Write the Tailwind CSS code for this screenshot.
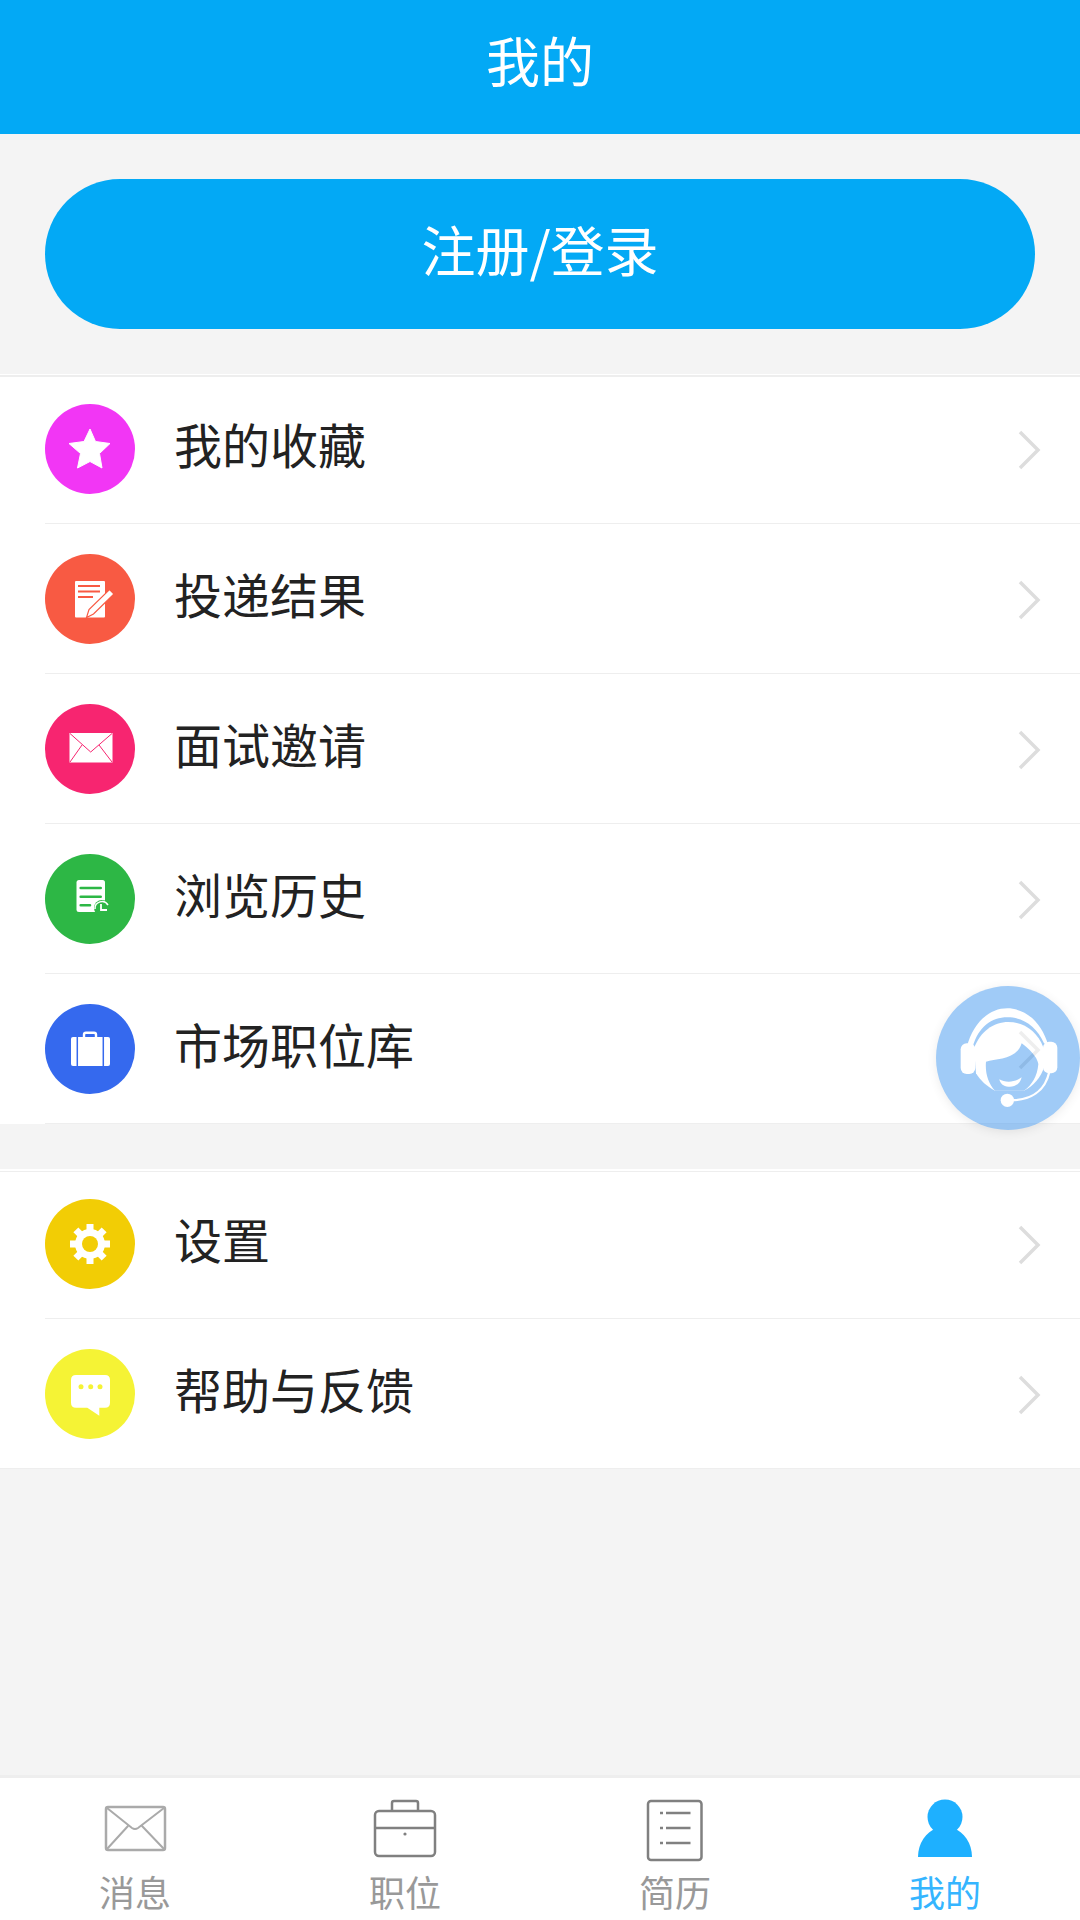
<!DOCTYPE html>
<html lang="zh-CN">
<head>
    <meta charset="UTF-8">
    <meta name="viewport" content="width=device-width, initial-scale=1.0">
    <title>我的</title>
    <script src="https://cdn.jsdelivr.net/npm/@tailwindcss/browser@4"></script>
</head>
<body class="relative w-[1080px] h-[1920px] overflow-hidden bg-[#f4f4f4] font-['Noto_Sans_CJK_SC',sans-serif]">
    <!-- Header -->
    <header class="h-[134px] bg-[#03a9f5] flex justify-center pt-[22px]">
        <h1 class="text-[54px] font-normal leading-[76px] text-white">我的</h1>
    </header>

    <!-- Login -->
    <div class="pt-[45px] px-[45px] h-[241px]">
        <button class="w-full h-[150px] pb-[12px] rounded-[75px] bg-[#03a9f5] text-white text-[54px]">注册/登录</button>
    </div>

    <!-- Main list -->
    <section class="bg-white border-t-2 border-t-[#eeeeee] shadow-[0_-1px_0_#ffffff]">
        <div class="h-[147px] pt-[27px] pl-[45px] ">
            <div class="h-[120px] border-b border-[#eeeeee]">
                <div class="h-[90px] flex items-center">
                    <svg class="w-[90px] h-[90px]" viewBox="0 0 90 90"><circle cx="45" cy="45" r="45" fill="#f236f5"/><path d="M45 25 50.500 37.500 65 39.500 54.500 49.500 57 64 45 57.500 32.500 64 35.500 49.500 24 39.500 39 37.500Z" fill="#fff" stroke="#fff" stroke-linejoin="round"/></svg>
                    <span class="ml-[39px] mb-[12px] text-[48px] text-[#222222]">我的收藏</span>
                    <svg class="ml-auto mt-[2px] mr-[38px] w-[24px] h-[40px]" viewBox="0 0 24 40"><path d="M2 2 20 20 2 38" fill="none" stroke="#dddddd" stroke-width="3.500"/></svg>
                </div>
            </div>
        </div>
        <div class="h-[150px] pt-[30px] pl-[45px]">
            <div class="h-[120px] border-b border-[#eeeeee]">
                <div class="h-[90px] flex items-center">
                    <svg class="w-[90px] h-[90px]" viewBox="0 0 90 90"><circle cx="45" cy="45" r="45" fill="#f85a43"/><rect x="30" y="27" width="30" height="36.500" rx="1" fill="#fff"/><path d="M33 32H55M33 37.500H55M33 43H48" stroke="#f85a43" stroke-width="1.800"/><path d="M64.500 35.500 69 40 48.500 60 41.500 63.500 44 55.500Z" fill="#fff" stroke="#f85a43" stroke-width="1.200"/></svg>
                    <span class="ml-[39px] mb-[12px] text-[48px] text-[#222222]">投递结果</span>
                    <svg class="ml-auto mt-[2px] mr-[38px] w-[24px] h-[40px]" viewBox="0 0 24 40"><path d="M2 2 20 20 2 38" fill="none" stroke="#dddddd" stroke-width="3.500"/></svg>
                </div>
            </div>
        </div>
        <div class="h-[150px] pt-[30px] pl-[45px]">
            <div class="h-[120px] border-b border-[#eeeeee]">
                <div class="h-[90px] flex items-center">
                    <svg class="w-[90px] h-[90px]" viewBox="0 0 90 90"><circle cx="45" cy="45" r="45" fill="#f72570"/><rect x="24.500" y="29" width="43" height="29.500" fill="#fff"/><path d="M25 29.500 45.700 48 67 29.500M25 58 37 41M67 58 54 41" fill="none" stroke="#f72570" stroke-width="1"/></svg>
                    <span class="ml-[39px] mb-[12px] text-[48px] text-[#222222]">面试邀请</span>
                    <svg class="ml-auto mt-[2px] mr-[38px] w-[24px] h-[40px]" viewBox="0 0 24 40"><path d="M2 2 20 20 2 38" fill="none" stroke="#dddddd" stroke-width="3.500"/></svg>
                </div>
            </div>
        </div>
        <div class="h-[150px] pt-[30px] pl-[45px]">
            <div class="h-[120px] border-b border-[#eeeeee]">
                <div class="h-[90px] flex items-center">
                    <svg class="w-[90px] h-[90px]" viewBox="0 0 90 90"><circle cx="45" cy="45" r="45" fill="#2db745"/><rect x="31.500" y="26" width="28.500" height="32" rx="2.500" fill="#fff"/><path d="M35.700 34H55.700M35.700 42.700H55.700M35.700 51.300H45" stroke="#2db745" stroke-width="2.600" stroke-linecap="round"/><circle cx="57" cy="54" r="8" fill="#2db745"/><path d="M50 55A7 7 0 0 1 63 51" fill="none" stroke="#fff" stroke-width="1.500"/><path d="M56 50V56H62" fill="none" stroke="#fff" stroke-width="1.800"/></svg>
                    <span class="ml-[39px] mb-[12px] text-[48px] text-[#222222]">浏览历史</span>
                    <svg class="ml-auto mt-[2px] mr-[38px] w-[24px] h-[40px]" viewBox="0 0 24 40"><path d="M2 2 20 20 2 38" fill="none" stroke="#dddddd" stroke-width="3.500"/></svg>
                </div>
            </div>
        </div>
        <div class="h-[150px] pt-[30px] pl-[45px]">
            <div class="h-[120px] border-b border-[#eeeeee]">
                <div class="h-[90px] flex items-center">
                    <svg class="w-[90px] h-[90px]" viewBox="0 0 90 90"><circle cx="45" cy="45" r="45" fill="#3569ee"/><rect x="26" y="33" width="39" height="29" rx="2" fill="#fff"/><path d="M32.300 33V62M58.300 33V62" stroke="#3569ee" stroke-width="1.500"/><path d="M39 33V30.500Q39 28.700 41 28.700H49Q51 28.700 51 30.500V33" fill="none" stroke="#fff" stroke-width="2.400"/></svg>
                    <span class="ml-[39px] mb-[12px] text-[48px] text-[#222222]">市场职位库</span>
                    <svg class="ml-auto mt-[2px] mr-[38px] w-[24px] h-[40px]" viewBox="0 0 24 40"><path d="M2 2 20 20 2 38" fill="none" stroke="#dddddd" stroke-width="3.500"/></svg>
                </div>
            </div>
        </div>
    </section>

    <!-- Settings list -->
    <section class="mt-[47px] bg-white border-t border-t-[#eeeeee] shadow-[0_-2px_0_#ffffff]">
        <div class="h-[147px] pt-[27px] pl-[45px]">
            <div class="h-[120px] border-b border-[#eeeeee]">
                <div class="h-[90px] flex items-center">
                    <svg class="w-[90px] h-[90px]" viewBox="0 0 90 90"><circle cx="45" cy="45" r="45" fill="#f2cd05"/><g fill="#fff"><rect x="41.500" y="25" width="7" height="40"/><rect x="41.500" y="25" width="7" height="40" transform="rotate(45 45 45)"/><rect x="41.500" y="25" width="7" height="40" transform="rotate(90 45 45)"/><rect x="41.500" y="25" width="7" height="40" transform="rotate(135 45 45)"/></g><circle cx="45" cy="45" r="11.500" fill="none" stroke="#fff" stroke-width="7"/><circle cx="45" cy="45" r="8" fill="#f2cd05"/></svg>
                    <span class="ml-[39px] mb-[12px] text-[48px] text-[#222222]">设置</span>
                    <svg class="ml-auto mt-[2px] mr-[38px] w-[24px] h-[40px]" viewBox="0 0 24 40"><path d="M2 2 20 20 2 38" fill="none" stroke="#dddddd" stroke-width="3.500"/></svg>
                </div>
            </div>
        </div>
        <div class="h-[150px] pt-[30px] border-b border-[#eeeeee]">
            <div class="h-[90px] ml-[45px] flex items-center">
                <svg class="w-[90px] h-[90px]" viewBox="0 0 90 90"><circle cx="45" cy="45" r="45" fill="#f5f335"/><path d="M31 26H60Q65 26 65 31V53.700Q65 58.700 60 58.700H54.300V66.700L42.300 58.700H31Q26 58.700 26 53.700V31Q26 26 31 26Z" fill="#fff"/><circle cx="36" cy="37.700" r="2.500" fill="#f5f335"/><circle cx="45.700" cy="37.700" r="2.500" fill="#f5f335"/><circle cx="55" cy="37.700" r="2.500" fill="#f5f335"/></svg>
                <span class="ml-[39px] mb-[12px] text-[48px] text-[#222222]">帮助与反馈</span>
                <svg class="ml-auto mt-[2px] mr-[38px] w-[24px] h-[40px]" viewBox="0 0 24 40"><path d="M2 2 20 20 2 38" fill="none" stroke="#dddddd" stroke-width="3.500"/></svg>
            </div>
        </div>
    </section>

    <!-- Floating customer service button -->
    <div class="absolute left-[936px] top-[986px] w-[144px] h-[144px] rounded-full bg-[#4398f0] opacity-50 shadow-[0_2px_8px_rgba(0,0,0,0.15)]">
        <svg class="w-[144px] h-[144px]" viewBox="108 78 432 432">
            <g fill="#fff">
                <rect x="182" y="250" width="44" height="92" rx="18"/>
                <rect x="429" y="245" width="43" height="95" rx="18"/>
                <path d="M200 262C220 185 270 145 322 145C380 145 425 190 445 255L432 250C410 200 370 172 322 172C275 172 235 200 218 262Z"/>
                <path d="M222 265C240 215 280 186 325 186C372 186 412 215 430 262L432 320C425 350 400 378 372 392L285 392C260 380 240 360 228 340Z"/>
            </g>
            <path d="M258 305C290 295 350 300 365 250C385 265 412 290 415 312C412 350 395 375 372 392L285 392C265 370 255 340 258 305Z" fill="#4398f0"/>
            <g fill="#fff">
                <path d="M298 358C315 368 345 368 365 352C360 375 340 382 325 380C310 380 300 370 298 358Z"/>
                <circle cx="322" cy="421" r="20"/>
            </g>
            <path d="M335 421C390 420 435 395 448 335" fill="none" stroke="#fff" stroke-width="7"/>
        </svg>
    </div>

    <!-- Tab bar -->
    <nav class="absolute left-0 bottom-0 w-[1080px] h-[145px] bg-white border-t-[3px] border-t-[#eeeeee] grid grid-cols-4">
        <div class="flex flex-col items-center">
            <svg class="mt-[20px] w-[90px] h-[70px]" viewBox="0 0 90 70"><rect x="16" y="9" width="59" height="43" rx="2" fill="none" stroke="#aaaaaa" stroke-width="2.500"/><path d="M17 10 42 30Q45 32 48 30L74 10M17 51 38 28M74 51 52 28" fill="none" stroke="#aaaaaa" stroke-width="2"/></svg>
            <span class="mt-[1px] text-[36px] leading-[44px] text-[#999999]">消息</span>
        </div>
        <div class="flex flex-col items-center">
            <svg class="mt-[20px] w-[90px] h-[70px]" viewBox="0 0 90 70"><rect x="15" y="13" width="60" height="45" rx="4" fill="none" stroke="#808080" stroke-width="2.500"/><path d="M32 13V5Q32 3 34 3H56Q58 3 58 5V13M15 30H75" fill="none" stroke="#808080" stroke-width="2.500"/><circle cx="45" cy="36" r="1.600" fill="#808080"/></svg>
            <span class="mt-[1px] text-[36px] leading-[44px] text-[#999999]">职位</span>
        </div>
        <div class="flex flex-col items-center">
            <svg class="mt-[20px] w-[90px] h-[70px]" viewBox="0 0 90 70"><rect x="18" y="3" width="53.500" height="59" rx="3" fill="none" stroke="#808080" stroke-width="2.500"/><path d="M36 15H60.500M36 30H60.500M36 45H60.500" stroke="#808080" stroke-width="2.500"/><path d="M30 15H33M30 30H33M30 45H33" stroke="#808080" stroke-width="2.500"/></svg>
            <span class="mt-[1px] text-[36px] leading-[44px] text-[#999999]">简历</span>
        </div>
        <div class="flex flex-col items-center">
            <svg class="mt-[20px] w-[90px] h-[70px]" viewBox="0 0 90 70"><circle cx="45" cy="19" r="17.500" fill="#1eb0ff"/><path d="M18 59C18 45 26 34 37 30H53C64 34 72 45 72 59Z" fill="#1eb0ff"/></svg>
            <span class="mt-[1px] text-[36px] leading-[44px] text-[#35b5ff]">我的</span>
        </div>
    </nav>
</body>
</html>
